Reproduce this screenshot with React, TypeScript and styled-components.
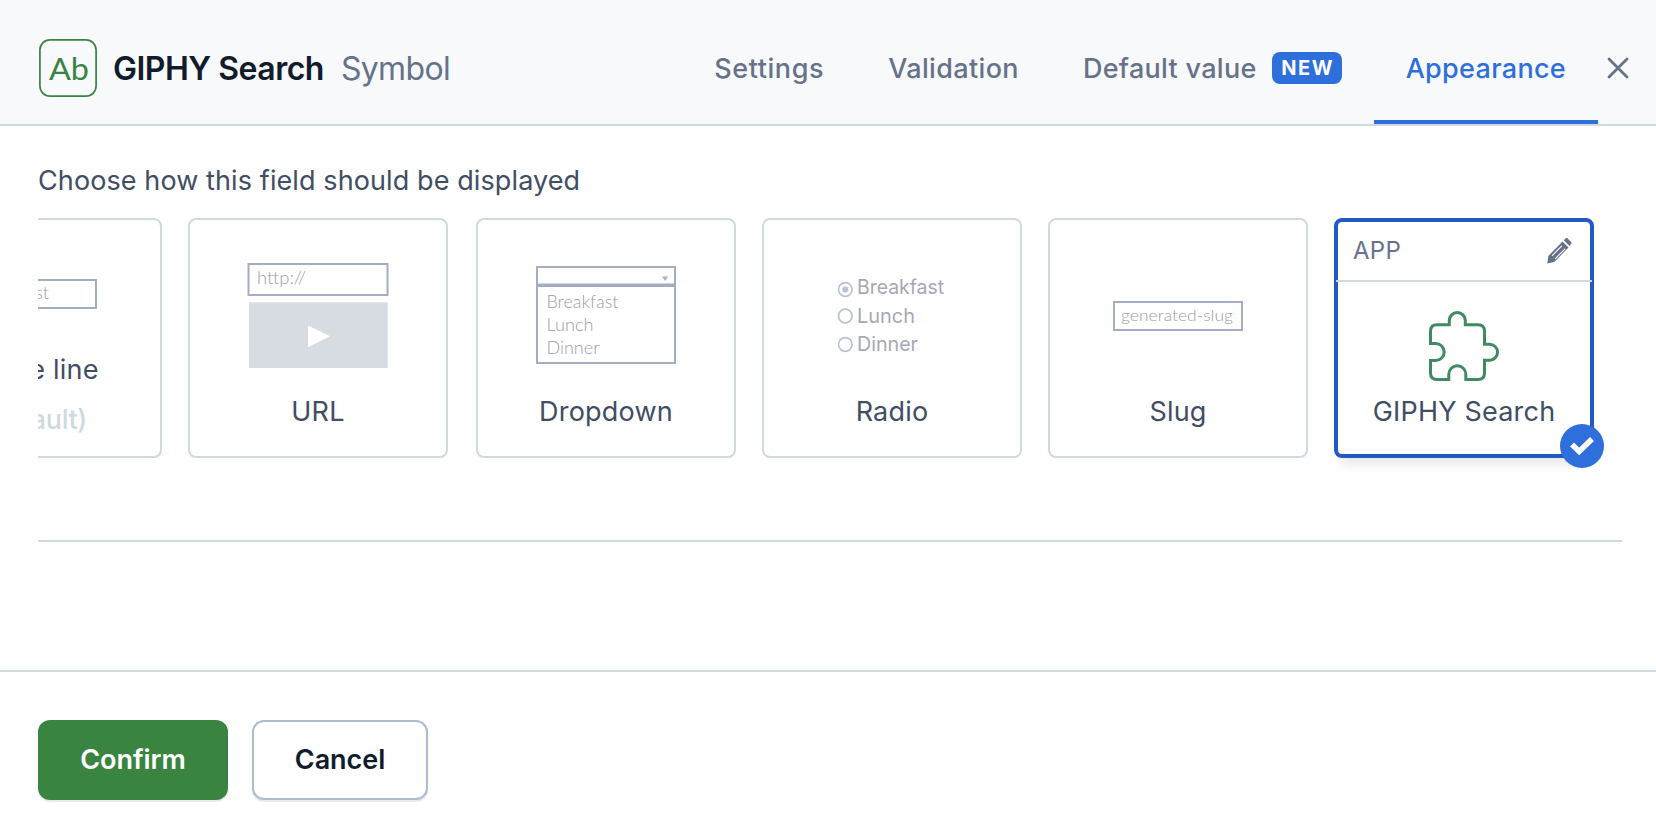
import React from 'react';
import styled, { createGlobalStyle, css } from 'styled-components';

const GlobalStyle = createGlobalStyle`
  * { box-sizing: border-box; }
  body {
    margin: 0;
    background: #fff;
    font-family: Inter, "Liberation Sans", sans-serif;
    font-size: 27px;
    color: #414d63;
  }
`;

const Dialog = styled.div`
  display: flex;
  flex-direction: column;
  width: 1656px;
  height: 838px;
  overflow: hidden;
  background: #fff;
`;

const Header = styled.header`
  display: flex;
  align-items: stretch;
  height: 126px;
  flex: none;
  padding: 0 26px 0 39px;
  background: #f7f9fb;
  border-bottom: 2px solid #cfd9e0;
`;

const TitleGroup = styled.div`
  display: flex;
  align-items: center;
  padding-top: 12px;
  white-space: nowrap;
`;

const FieldIcon = styled.svg`
  display: block;
  width: 58px;
  height: 58px;
`;

const Title = styled.h1`
  margin: 0 0 0 16px;
  padding-top: 2px;
  font-size: 32px;
  line-height: 40px;
  font-weight: 600;
  letter-spacing: -0.5px;
  color: #111b2b;
`;

const FieldType = styled.span`
  margin-left: 17px;
  padding-top: 2px;
  font-size: 32px;
  line-height: 40px;
  letter-spacing: -0.65px;
  color: #67728a;
`;

const Tabs = styled.nav`
  display: flex;
  margin-left: auto;
`;

const Tab = styled.button<{ $active?: boolean; $spacing?: number }>`
  display: flex;
  align-items: center;
  padding: 13px 32px 0;
  border: 0;
  background: none;
  font: 500 27px/40px Inter, "Liberation Sans", sans-serif;
  letter-spacing: ${(p) => p.$spacing ?? 0.3}px;
  white-space: nowrap;
  color: ${(p) => (p.$active ? '#2e6fdc' : '#67728a')};
  ${(p) => p.$active && css`box-shadow: inset 0 -4px 0 #2e6fdc;`}
`;

const Badge = styled.span`
  display: flex;
  align-items: center;
  justify-content: center;
  width: 70px;
  height: 32px;
  margin: -1px 0 0 15px;
  padding-left: 2px;
  border-radius: 8px;
  background: #2e6fdc;
  color: #fff;
  font-size: 20px;
  font-weight: 700;
  line-height: 32px;
  letter-spacing: 1.6px;
`;

const CloseButton = styled.button`
  display: flex;
  align-items: center;
  padding: 12px 0 0 8px;
  border: 0;
  background: none;
`;

const Body = styled.main`
  display: flex;
  flex-direction: column;
  height: 546px;
  flex: none;
  padding: 35px 34px 0 38px;
  border-bottom: 2px solid #cfd9e0;
`;

const Prompt = styled.p`
  margin: 0;
  line-height: 40px;
  letter-spacing: 0.1px;
`;

const CardStrip = styled.div`
  display: flex;
  justify-content: flex-end;
  gap: 26px;
  height: 321px;
  padding: 17px 28px 0 0;
  overflow: hidden;
`;

const Divider = styled.hr`
  width: 100%;
  height: 2px;
  margin: 18px 0 0;
  border: 0;
  background: #cfd9e0;
  flex: none;
`;

const Card = styled.div<{ $wideGap?: boolean; $selected?: boolean }>`
  position: relative;
  display: flex;
  flex-direction: column;
  align-items: center;
  flex: none;
  width: 260px;
  height: 240px;
  margin-right: ${(p) => (p.$wideGap ? 2 : 0)}px;
  border: ${(p) => (p.$selected ? '4px solid #2359c2' : '2px solid #cfd9e0')};
  border-radius: 8px;
  background: #fff;
  ${(p) => p.$selected && css`box-shadow: 0 12px 12px -6px rgba(0, 0, 0, 0.1);`}
`;

const Preview = styled.svg`
  display: block;
  width: 256px;
  height: 162px;
  flex: none;
  font-family: Lato, "Open Sans", sans-serif;
  font-weight: 300;
`;

const CardLabel = styled.span<{ $offset?: number }>`
  line-height: 40px;
  margin-top: ${(p) => p.$offset ?? 10}px;
  letter-spacing: 0.2px;
  white-space: nowrap;
`;

const DefaultNote = styled.span`
  margin-top: 10px;
  line-height: 40px;
  font-weight: 500;
  letter-spacing: -0.4px;
  color: #cfd9e0;
`;

const AppBar = styled.div`
  display: flex;
  align-items: center;
  justify-content: space-between;
  width: 256px;
  height: 62px;
  flex: none;
  margin-top: -2px;
  padding: 1px 19px 0 17px;
  border-bottom: 2px solid #cfd9e0;
  font-size: 24px;
  letter-spacing: 0.3px;
  color: #67728a;
`;

const AppIcon = styled.svg`
  display: block;
  width: 72px;
  height: 72px;
  margin-top: 28px;
  flex: none;
`;

const SelectedMark = styled.svg`
  position: absolute;
  right: -14px;
  bottom: -14px;
  width: 44px;
  height: 44px;
`;

const Footer = styled.footer`
  display: flex;
  gap: 24px;
  padding: 48px 38px 0;
`;

const Button = styled.button<{ $primary?: boolean }>`
  width: ${(p) => (p.$primary ? 190 : 176)}px;
  height: 80px;
  padding: 0;
  border: ${(p) => (p.$primary ? '0' : '2px solid #aebdcc')};
  border-radius: 12px;
  background: ${(p) => (p.$primary ? '#3a8442' : '#fff')};
  color: ${(p) => (p.$primary ? '#fff' : '#111b2b')};
  font: 600 27px/40px Inter, "Liberation Sans", sans-serif;
  letter-spacing: -0.05px;
  box-shadow: 0 2px 1px rgba(25, 37, 50, 0.1);
`;

const RadioLabels = styled.g`
  font-family: Inter, "Liberation Sans", sans-serif;
  font-size: 20px;
  font-weight: 400;
`;

const outline = { fill: 'none', stroke: '#a3adc6', strokeWidth: 2 };

const fitted = { lengthAdjust: 'spacingAndGlyphs' };

const SingleLinePreview = () => (
  <Preview viewBox="0 0 256 162">
    <rect x="64" y="60" width="128" height="28" {...outline} />
    <text x="73" y="79" fontSize="17.500" textLength="72" {...fitted} fill="#9a9da6">Breakfast</text>
  </Preview>
);

const UrlPreview = () => (
  <Preview viewBox="0 0 256 162">
    <rect x="58.500" y="44" width="139" height="31" {...outline} />
    <text x="67" y="64" fontSize="18" textLength="49" {...fitted} fill="#9a9da6">http://</text>
    <rect x="59" y="82.300" width="138.700" height="65.700" fill="#d7dce3" />
    <path d="M118 105.500V127.200L140 116.300Z" fill="#fff" />
  </Preview>
);

const DropdownPreview = () => (
  <Preview viewBox="0 0 256 162">
    <rect x="59" y="47" width="138" height="17.500" {...outline} />
    <rect x="59" y="66" width="138" height="77" {...outline} />
    <path d="M184 56.500H190L187 61Z" fill="#a3adc6" />
    <g fontSize="17.500" fill="#9a9da6">
      <text x="68.500" y="87.500" textLength="72" {...fitted}>Breakfast</text>
      <text x="68.500" y="110.500" textLength="47" {...fitted}>Lunch</text>
      <text x="68.500" y="133.500" textLength="53" {...fitted}>Dinner</text>
    </g>
  </Preview>
);

const RadioPreview = () => (
  <Preview viewBox="0 0 256 162">
    <g fill="none" stroke="#b9c3d0" strokeWidth="1.700">
      <circle cx="81.300" cy="69.500" r="6.800" />
      <circle cx="81.300" cy="96" r="6.800" />
      <circle cx="81.300" cy="124.500" r="6.800" />
    </g>
    <circle cx="81.300" cy="69.500" r="3" fill="#b9c3d0" />
    <RadioLabels fill="#a5a8b4">
      <text x="93" y="74" textLength="87" {...fitted}>Breakfast</text>
      <text x="93" y="103" textLength="58" {...fitted}>Lunch</text>
      <text x="93" y="131" textLength="61" {...fitted}>Dinner</text>
    </RadioLabels>
  </Preview>
);

const SlugPreview = () => (
  <Preview viewBox="0 0 256 162">
    <rect x="64" y="82" width="128" height="28" {...outline} />
    <text x="71" y="101" fontSize="16" textLength="112" {...fitted} fill="#9a9da6">generated-slug</text>
  </Preview>
);

const Pencil = () => (
  <svg width="26" height="27" viewBox="0 0 26 27" fill="none">
    <path d="M0.300 26.500L1.300 19L15.500 4.500L21.500 10.500L7.300 25Z" fill="#67728a" />
    <path d="M5 18.800L14.800 8.800M8.200 21.800L18 11.800" stroke="#fff" strokeWidth="1.100" />
    <path d="M16.800 3.300L19 1.100Q19.600 0.500 20.200 1.100L24.500 5.400Q25.100 6 24.500 6.600L22.500 9Z" fill="#67728a" />
  </svg>
);

export default function App() {
  return (
    <>
      <GlobalStyle />
      <Dialog>
        <Header>
          <TitleGroup>
            <FieldIcon viewBox="0 0 58 58">
              <rect x="0.900" y="0.900" width="56.200" height="56.200" rx="10" fill="none" stroke="#3a8442" strokeWidth="1.700" />
              <text x="10" y="41" fontFamily="Lato, sans-serif" fontSize="30" textLength="40" {...fitted} fill="#3a8442">Ab</text>
            </FieldIcon>
            <Title>GIPHY Search</Title>
            <FieldType>Symbol</FieldType>
          </TitleGroup>
          <Tabs>
            <Tab $spacing={0.6}>Settings</Tab>
            <Tab $spacing={0.35}>Validation</Tab>
            <Tab>
              Default value
              <Badge>NEW</Badge>
            </Tab>
            <Tab $active>Appearance</Tab>
          </Tabs>
          <CloseButton aria-label="Close">
            <svg width="24" height="24" viewBox="0 0 24 24" stroke="#67728a" strokeWidth="2.800" strokeLinecap="round">
              <path d="M3 3L21 21M21 3L3 21" />
            </svg>
          </CloseButton>
        </Header>
        <Body>
          <Prompt>Choose how this field should be displayed</Prompt>
          <CardStrip>
            <Card>
              <SingleLinePreview />
              <CardLabel $offset={-32}>Single line</CardLabel>
              <DefaultNote>(Default)</DefaultNote>
            </Card>
            <Card $wideGap>
              <UrlPreview />
              <CardLabel>URL</CardLabel>
            </Card>
            <Card>
              <DropdownPreview />
              <CardLabel>Dropdown</CardLabel>
            </Card>
            <Card>
              <RadioPreview />
              <CardLabel>Radio</CardLabel>
            </Card>
            <Card>
              <SlugPreview />
              <CardLabel>Slug</CardLabel>
            </Card>
            <Card $selected>
              <AppBar>
                APP
                <Pencil />
              </AppBar>
              <AppIcon viewBox="0 0 72 72" fill="none" stroke="#3f8a61" strokeWidth="3">
                <path d="M21.300 14.800V10.500A8 8 0 0 1 37.300 10.500V14.800H50Q56.500 14.800 56.500 21.300V34.200H61.500A8 8 0 0 1 61.500 50.200H56.500V63Q56.500 69.500 50 69.500H37.800V64.300A8.500 8.500 0 0 0 20.800 64.300V69.500H9Q2.500 69.500 2.500 63V50.500H7.700A8.500 8.500 0 0 0 7.700 33.500H2.500V21.300Q2.500 14.800 9 14.800Z" />
              </AppIcon>
              <CardLabel>GIPHY Search</CardLabel>
              <SelectedMark viewBox="0 0 44 44">
                <circle cx="22" cy="22" r="22" fill="#2e6fdc" />
                <path d="M12 20.500L19.200 27.500L32 15" fill="none" stroke="#fff" strokeWidth="5.500" />
              </SelectedMark>
            </Card>
          </CardStrip>
          <Divider />
        </Body>
        <Footer>
          <Button $primary>Confirm</Button>
          <Button>Cancel</Button>
        </Footer>
      </Dialog>
    </>
  );
}
